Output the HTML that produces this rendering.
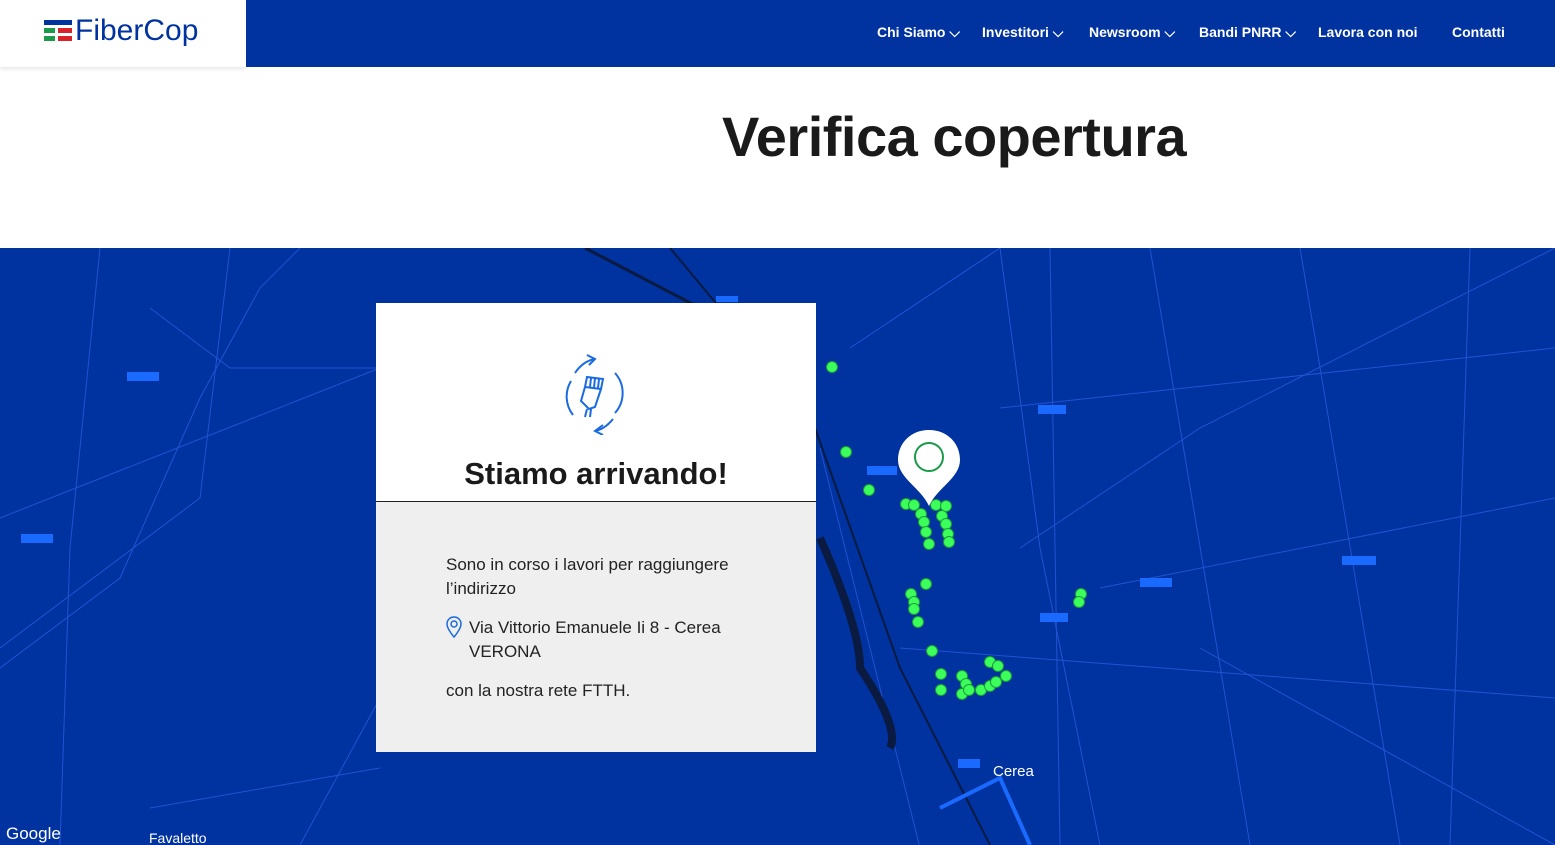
<!DOCTYPE html>
<html><head><meta charset="utf-8"><style>
*{margin:0;padding:0;box-sizing:border-box}
body{width:1555px;height:845px;overflow:hidden;background:#fff;font-family:"Liberation Sans",sans-serif;position:relative}
.logo{position:absolute;left:0;top:0;width:246px;height:67px;background:#fff;box-shadow:0 2px 4px rgba(0,0,0,.1)}
.nav{position:absolute;left:246px;top:0;right:0;height:67px;background:#0033a0;color:#fff;font-weight:bold;font-size:14px}
.nav span{position:absolute;top:24px}
h1{position:absolute;left:722px;top:104px;font-size:56px;font-weight:bold;color:#1a1a1a;letter-spacing:-0.5px}
.map{position:absolute;left:0;top:248px;width:1555px;height:597px;background:#0033a0;overflow:hidden}
.card{position:absolute;left:376px;top:303px;width:440px;height:449px;background:#efefef}
.ct{position:absolute;left:0;top:0;width:440px;height:199px;background:#fff;border-bottom:1px solid #222}
.card h2{position:absolute;left:0;width:440px;top:153px;text-align:center;font-size:31px;font-weight:bold;color:#1a1a1a}
.txt{position:absolute;left:70px;font-size:17px;color:#222;line-height:24px}
.dot{position:absolute;width:12px;height:12px;border-radius:50%;background:#3dff5c;border:1px solid #1a9c3a}
</style></head><body>
<div class="logo">
<svg style="position:absolute;left:44px;top:20px" width="28" height="22"><rect x="0" y="0" width="28" height="5" fill="#0033a0"/><rect x="0" y="8" width="11" height="5" fill="#1a9a4a"/><rect x="14" y="8" width="14" height="5" fill="#d8232a"/><rect x="0" y="16" width="11" height="5" fill="#1a9a4a"/><rect x="14" y="16" width="14" height="5" fill="#d8232a"/></svg>
<div style="position:absolute;left:75px;top:14px;font-size:30px;color:#0033a0">FiberCop</div>
</div>
<div class="nav">
<span style="left:631px">Chi Siamo ⌵</span><span style="left:736px">Investitori ⌵</span><span style="left:843px">Newsroom ⌵</span><span style="left:953px">Bandi PNRR ⌵</span><span style="left:1072px">Lavora con noi</span><span style="left:1206px">Contatti</span>
</div>
<h1>Verifica copertura</h1>
<div class="map">
<svg width="1555" height="597" style="position:absolute;left:0;top:0" stroke="#2a5ae0" fill="none" stroke-width="1" opacity=".8">
<path d="M0 420 L120 330 L200 150 L260 40 L300 0"/><path d="M60 597 L70 300 L100 0"/><path d="M0 270 L380 120"/><path d="M150 60 L230 120 L380 120"/>
<path d="M1000 0 L1040 300 L1100 597"/><path d="M1050 0 L1060 597"/><path d="M1100 340 L1555 250"/><path d="M1300 0 L1400 597"/>
<path d="M1020 300 L1200 180 L1555 0"/><path d="M1000 160 L1555 100"/><path d="M820 200 L920 600"/><path d="M900 400 L1555 450"/>
<path d="M1150 0 L1250 597"/><path d="M1200 400 L1555 597"/><path d="M300 597 L380 450"/><path d="M150 560 L380 520"/>
<path d="M1470 0 L1450 597"/><path d="M850 100 L1000 0"/><path d="M230 0 L200 250 L0 400"/>
</svg>
<svg width="1555" height="597" style="position:absolute;left:0;top:0" fill="none">
<path d="M585 0 L700 60" stroke="#0a1a40" stroke-width="3"/><path d="M670 0 L720 60" stroke="#0a1a40" stroke-width="2"/>
<path d="M815 180 L900 420 L990 597" stroke="#0a1a40" stroke-width="2"/>
<path d="M820 290 Q860 380 860 420 Q900 480 890 500" stroke="#0a1a40" stroke-width="8"/>
<path d="M940 560 L1000 530 L1030 597" stroke="#1a6aff" stroke-width="4"/>
<rect x="127" y="124" width="32" height="9" fill="#1a6aff"/><rect x="21" y="286" width="32" height="9" fill="#1a6aff"/><rect x="1038" y="157" width="28" height="9" fill="#1a6aff"/><rect x="1342" y="308" width="34" height="9" fill="#1a6aff"/><rect x="1140" y="330" width="32" height="9" fill="#1a6aff"/><rect x="1040" y="365" width="28" height="9" fill="#1a6aff"/><rect x="867" y="218" width="30" height="9" fill="#1a6aff"/><rect x="958" y="511" width="22" height="9" fill="#1a6aff"/><rect x="716" y="48" width="22" height="6" fill="#1a6aff"/>
</svg>
<div class="dot" style="left:826px;top:113px"></div><div class="dot" style="left:840px;top:198px"></div><div class="dot" style="left:863px;top:236px"></div>
<div class="dot" style="left:900px;top:250px"></div><div class="dot" style="left:908px;top:251px"></div><div class="dot" style="left:915px;top:260px"></div><div class="dot" style="left:918px;top:268px"></div><div class="dot" style="left:920px;top:278px"></div><div class="dot" style="left:923px;top:290px"></div><div class="dot" style="left:930px;top:251px"></div><div class="dot" style="left:940px;top:252px"></div><div class="dot" style="left:936px;top:262px"></div><div class="dot" style="left:940px;top:270px"></div><div class="dot" style="left:942px;top:280px"></div><div class="dot" style="left:943px;top:288px"></div>
<div class="dot" style="left:905px;top:340px"></div><div class="dot" style="left:908px;top:348px"></div><div class="dot" style="left:908px;top:355px"></div><div class="dot" style="left:912px;top:368px"></div><div class="dot" style="left:920px;top:330px"></div><div class="dot" style="left:926px;top:397px"></div>
<div class="dot" style="left:935px;top:420px"></div><div class="dot" style="left:935px;top:436px"></div><div class="dot" style="left:956px;top:422px"></div><div class="dot" style="left:960px;top:430px"></div><div class="dot" style="left:956px;top:440px"></div><div class="dot" style="left:963px;top:436px"></div><div class="dot" style="left:975px;top:436px"></div><div class="dot" style="left:984px;top:432px"></div><div class="dot" style="left:990px;top:428px"></div><div class="dot" style="left:1000px;top:422px"></div><div class="dot" style="left:984px;top:408px"></div><div class="dot" style="left:992px;top:412px"></div>
<div class="dot" style="left:1075px;top:340px"></div><div class="dot" style="left:1073px;top:348px"></div>
<svg style="position:absolute;left:896px;top:180px" width="66" height="80"><path d="M33 2 C15 2 2 15 2 32 C2 50 25 60 33 78 C41 60 64 50 64 32 C64 15 51 2 33 2Z" fill="#fff"/><circle cx="33" cy="29" r="14" fill="none" stroke="#1a9a4a" stroke-width="2"/></svg>
<div style="position:absolute;left:993px;top:515px;color:#fff;font-size:15px">Cerea</div>
<div style="position:absolute;left:6px;top:576px;color:#fff;font-size:17px">Google</div>
<div style="position:absolute;left:149px;top:582px;color:#fff;font-size:14px">Favaletto</div>
</div>
<div class="card">
<div class="ct">
<svg style="position:absolute;left:183px;top:50px" width="72" height="82" fill="none" stroke="#1a6ae0" stroke-width="2"><path d="M12 28 A30 30 0 0 0 14 62"/><path d="M16 20 Q24 8 36 6"/><path d="M28 2 L36 6 L30 12"/><path d="M56 20 A30 30 0 0 1 56 60"/><path d="M54 66 Q46 76 36 78"/><path d="M44 72 L36 78 L44 82"/><path d="M28 24 L44 26 L42 36 L26 34Z"/><path d="M26 34 L22 48 L30 56 L36 54 L42 36"/><path d="M28 56 L26 64 M32 56 L31 64"/><path d="M32 25 L31 34 M36 25 L35 35 M40 26 L39 35"/></svg>
<h2>Stiamo arrivando!</h2>
</div>
<div class="txt" style="top:250px">Sono in corso i lavori per raggiungere<br>l’indirizzo</div>
<svg style="position:absolute;left:70px;top:313px" width="16" height="22" fill="none" stroke="#1a6ae0" stroke-width="1.5"><path d="M8 1 C4 1 1 4 1 8 C1 13 8 21 8 21 C8 21 15 13 15 8 C15 4 12 1 8 1Z"/><circle cx="8" cy="8" r="3"/></svg>
<div class="txt" style="top:313px;left:93px">Via Vittorio Emanuele Ii 8 - Cerea<br>VERONA</div>
<div class="txt" style="top:376px">con la nostra rete FTTH.</div>
</div>
</body></html>
